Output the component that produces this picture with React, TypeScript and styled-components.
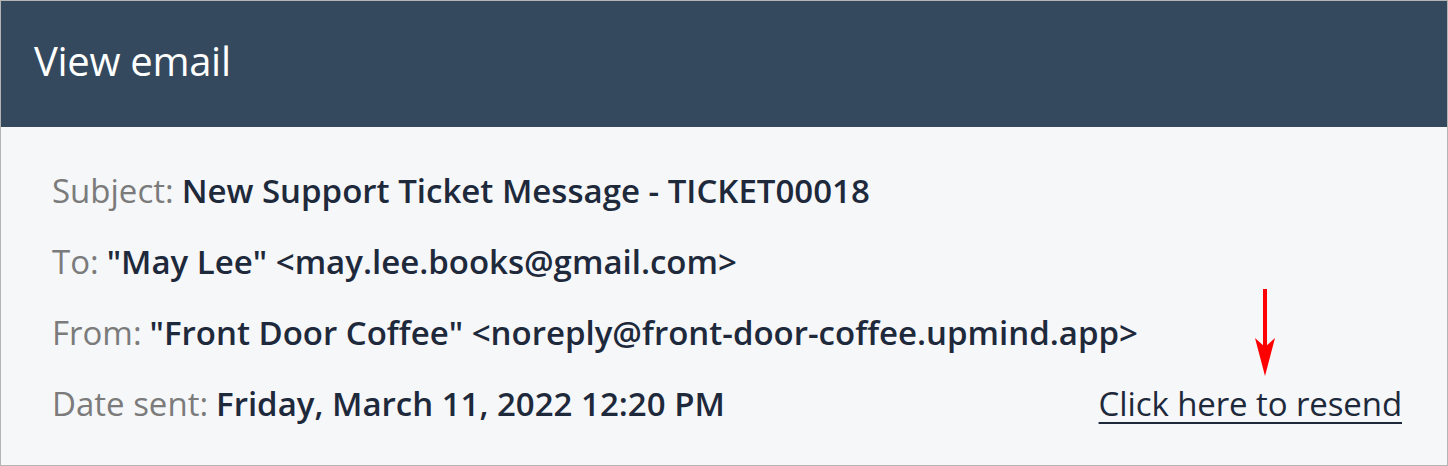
import styled, { createGlobalStyle } from 'styled-components';

const GlobalStyle = createGlobalStyle`
  html, body {
    margin: 0;
    padding: 0;
    background: #ffffff;
  }
  body {
    font-family: 'Open Sans', 'Noto Sans', Arial, sans-serif;
  }
`;

const Panel = styled.div`
  width: 1448px;
  height: 466px;
  box-sizing: border-box;
  border: 1px solid #b4b4b4;
  background: #f5f7f9;
  display: flex;
  flex-direction: column;
`;

const Header = styled.header`
  height: 126px;
  background: #34495e;
  display: flex;
  align-items: center;
  padding: 0 0 8px 33px;
  box-sizing: border-box;
`;

const Title = styled.h1`
  margin: 0;
  color: #ffffff;
  font-size: 40px;
  font-weight: 400;
  letter-spacing: -0.3px;
`;

const Body = styled.div`
  padding: 28px 45px 0 51px;
  display: flex;
  flex-direction: column;
`;

const Row = styled.div<{ split?: boolean }>`
  height: 71px;
  display: flex;
  align-items: center;
  justify-content: ${(p) => (p.split ? 'space-between' : 'flex-start')};
  font-size: 33px;
  white-space: nowrap;
`;

const Label = styled.span`
  color: #7b7b7b;
  margin-right: 8px;
`;

const Value = styled.span`
  color: #1e293b;
  font-weight: 600;
`;

const LinkWrap = styled.div`
  position: relative;
`;

const ResendLink = styled.a`
  color: #1e293b;
  text-decoration: underline;
  text-underline-offset: 6px;
  text-decoration-thickness: 2px;
  letter-spacing: -0.1px;
  cursor: pointer;
`;

const Arrow = styled.svg`
  position: absolute;
  left: 155px;
  top: -92px;
`;

const rows = [
  { label: 'Subject:', value: 'New Support Ticket Message - TICKET00018' },
  { label: 'To:', value: '"May Lee" <may.lee.books@gmail.com>' },
  { label: 'From:', value: '"Front Door Coffee" <noreply@front-door-coffee.upmind.app>' },
];

const App = () => {
  return (
    <>
      <GlobalStyle />
      <Panel>
        <Header>
          <Title>View email</Title>
        </Header>
        <Body>
          {rows.map((r, i) => (
            <Row key={i}>
              <Label>{r.label}</Label>
              <Value>{r.value}</Value>
            </Row>
          ))}
          <Row split>
            <div>
              <Label>Date sent:</Label>
              <Value>Friday, March 11, 2022 12:20 PM</Value>
            </div>
            <LinkWrap>
              <ResendLink>Click here to resend</ResendLink>
              <Arrow width="22" height="88" viewBox="0 0 22 88">
                <rect x="9" y="0" width="4" height="58" fill="#ff0000" />
                <polygon points="1,49 11,58 21,49 11,87" fill="#ff0000" />
              </Arrow>
            </LinkWrap>
          </Row>
        </Body>
      </Panel>
    </>
  );
};

export default App;
